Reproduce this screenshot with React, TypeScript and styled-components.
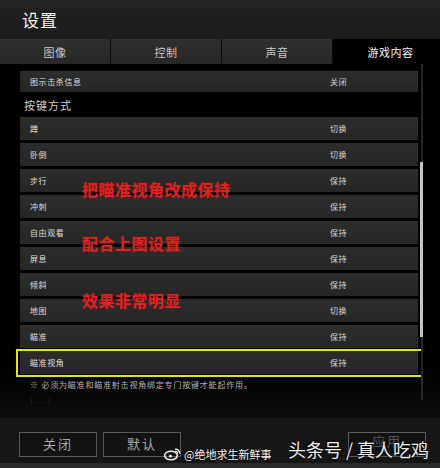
import React from "react";
import styled, { createGlobalStyle } from "styled-components";

const Global = createGlobalStyle`
  html, body { margin: 0; padding: 0; background: #000; }
  body { font-family: "Noto Sans CJK SC", "Noto Sans", sans-serif; }
  * { box-sizing: border-box; }
`;

const Page = styled.div`
  position: relative;
  width: 440px;
  height: 468px;
  display: flex;
  flex-direction: column;
  overflow: hidden;
  background: #000;
`;

const Header = styled.div`
  height: 39px;
  display: flex;
  align-items: center;
  padding-left: 22px;
  background: linear-gradient(#232323, #1b1b1b);
`;

const Title = styled.div`
  color: #f2f2f2;
  font-size: 17px;
  letter-spacing: 1px;
  line-height: 1;
`;

const TabBar = styled.div`
  height: 25px;
  display: grid;
  grid-template-columns: 111px 111px 111px 1fr;
  background: #000;
`;

const Tab = styled.div<{ $active?: boolean }>`
  display: flex;
  align-items: center;
  justify-content: center;
  font-size: 11px;
  letter-spacing: 0.5px;
  color: ${(p) => (p.$active ? "#f4f4f4" : "#c8c8c8")};
  background: ${(p) => (p.$active ? "#000" : "linear-gradient(#303030, #272727)")};
  border-right: ${(p) => (p.$active ? "none" : "1px solid #0c0c0c")};
  padding-left: ${(p) => (p.$active ? "8px" : "0")};
`;

const Content = styled.div`
  position: relative;
  flex: 1;
  background: linear-gradient(#000 85%, #0c0c0c);
  padding: 7px 22px 0 20px;
`;

const List = styled.div`
  display: flex;
  flex-direction: column;
  gap: 3px;
`;

const Row = styled.div<{ $hl?: boolean; $tall?: boolean }>`
  position: relative;
  height: ${(p) => (p.$tall ? "21px" : "23px")};
  display: grid;
  grid-template-columns: 300px 1fr;
  align-items: center;
  padding-left: 10px;
  background: linear-gradient(#2d2d2d, #262626);
  font-size: 8px;
  color: #dcdcdc;
  letter-spacing: 0.6px;
  ${(p) =>
    p.$hl &&
    `
    &::after {
      content: "";
      position: absolute;
      inset: -2px -5px -3px -4px;
      border: 2px solid #e4e01e;
    }
  `}
`;

const Value = styled.span`
  color: #d6d6d6;
`;

const Section = styled.div`
  height: 25px;
  display: flex;
  align-items: center;
  padding-left: 4px;
  font-size: 11px;
  color: #d0d0d0;
  letter-spacing: 1px;
`;

const Note = styled.div<{ $faint?: boolean }>`
  margin-top: ${(p) => (p.$faint ? "4px" : "5px")};
  padding-left: 10px;
  font-size: 8px;
  letter-spacing: 0.8px;
  color: ${(p) => (p.$faint ? "#2c2c2c" : "#b4b4b4")};
`;

const Track = styled.div`
  position: absolute;
  right: 17px;
  top: 0;
  bottom: 18px;
  width: 2px;
  background: #262626;
`;

const Thumb = styled.div`
  position: absolute;
  left: -1px;
  top: 98px;
  width: 3px;
  height: 175px;
  background: #c4c4c4;
`;

const Mark = styled.div<{ $top: number }>`
  position: absolute;
  left: 82px;
  top: ${(p) => p.$top}px;
  font-size: 16px;
  font-weight: 700;
  color: #de2222;
  letter-spacing: 0.5px;
  line-height: 1;
  white-space: nowrap;
  text-shadow: 0 0 2px rgba(200, 20, 20, 0.5);
`;

const Footer = styled.div`
  height: 50px;
  display: flex;
  flex-direction: column;
  background: #151515;
`;

const Buttons = styled.div`
  flex: 1;
  display: flex;
  align-items: flex-start;
  gap: 6px;
  padding: 14px 14px 0 19px;
`;

const Btn = styled.div<{ $push?: boolean }>`
  width: 78px;
  height: 25px;
  display: flex;
  align-items: flex-start;
  justify-content: center;
  padding-top: ${(p) => (p.$push ? "1px" : "4px")};
  border: 1px solid #5a5a5a;
  background: #121212;
  color: ${(p) => (p.$push ? "#555" : "#a9a9a9")};
  font-size: 13px;
  line-height: 1;
  letter-spacing: 2px;
  margin-left: ${(p) => (p.$push ? "auto" : "0")};
`;

const BottomStrip = styled.div`
  height: 5px;
  background: #2a2a2a;
`;

const Weibo = styled.div`
  position: absolute;
  left: 164px;
  top: 446px;
  display: flex;
  align-items: center;
  gap: 3px;
  font-size: 11px;
  white-space: nowrap;
  color: #f4f4f4;
  text-shadow: 0 0 2px #000;
`;

const Toutiao = styled.div`
  position: absolute;
  left: 288px;
  top: 440px;
  font-size: 18px;
  line-height: 1.1;
  white-space: nowrap;
  color: #eeeeee;
  text-shadow: 0 0 3px #000, 0 0 1px #000;
`;

const WeiboLogo = () => (
  <svg width="17" height="14" viewBox="0 0 17 14">
    <ellipse cx="7" cy="8.5" rx="6.3" ry="4.3" fill="none" stroke="#f2f2f2" strokeWidth="1.5" />
    <circle cx="6.4" cy="9" r="1.6" fill="#f2f2f2" />
    <path d="M11 2.2 A4 4 0 0 1 15.6 6.6" fill="none" stroke="#f2f2f2" strokeWidth="1.3" />
    <path d="M11.2 4.2 A2 2 0 0 1 13.6 6.4" fill="none" stroke="#f2f2f2" strokeWidth="1.1" />
  </svg>
);

const keys: [string, string][] = [
  ["蹲", "切换"],
  ["卧倒", "切换"],
  ["步行", "保持"],
  ["冲刺", "保持"],
  ["自由观看", "保持"],
  ["屏息", "保持"],
  ["倾斜", "保持"],
  ["地图", "切换"],
  ["瞄准", "保持"],
  ["瞄准视角", "保持"],
];

export default function App() {
  return (
    <Page>
      <Global />
      <Header>
        <Title>设置</Title>
      </Header>
      <TabBar>
        <Tab>图像</Tab>
        <Tab>控制</Tab>
        <Tab>声音</Tab>
        <Tab $active>游戏内容</Tab>
      </TabBar>
      <Content>
        <List>
          <Row $tall>
            <span>图示击杀信息</span>
            <Value>关闭</Value>
          </Row>
        </List>
        <Section>按键方式</Section>
        <List>
          {keys.map(([k, v]) => (
            <Row key={k} $hl={k === "瞄准视角"}>
              <span>{k}</span>
              <Value>{v}</Value>
            </Row>
          ))}
        </List>
        <Note>※ 必须为瞄准和瞄准射击视角绑定专门按键才能起作用。</Note>
        <Note $faint>( ... )</Note>
        <Track>
          <Thumb />
        </Track>
        <Mark $top={117}>把瞄准视角改成保持</Mark>
        <Mark $top={171}>配合上图设置</Mark>
        <Mark $top={228}>效果非常明显</Mark>
      </Content>
      <Footer>
        <Buttons>
          <Btn>关闭</Btn>
          <Btn>默认</Btn>
          <Btn $push>应用</Btn>
        </Buttons>
        <BottomStrip />
      </Footer>
      <Weibo>
        <WeiboLogo />
        <span>@绝地求生新鲜事</span>
      </Weibo>
      <Toutiao>头条号 / 真人吃鸡</Toutiao>
    </Page>
  );
}
